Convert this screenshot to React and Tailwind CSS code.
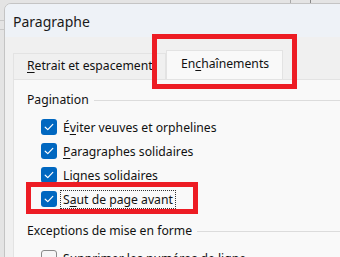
function Check({ checked = true }) {
  if (!checked) {
    return <span className="block h-[16px] w-[16px] shrink-0 rounded-[3px] border border-[#8a8a8a] bg-[#f6f6f6]" />
  }
  return (
    <span className="flex h-[16px] w-[16px] shrink-0 items-center justify-center rounded-[3px] bg-[#0067c0]">
      <svg width="10" height="8" viewBox="0 0 10 8" fill="none">
        <path d="M1.2 4.2 L3.8 6.6 L8.8 1.4" stroke="white" strokeWidth="1.2" strokeLinecap="round" strokeLinejoin="round" />
      </svg>
    </span>
  )
}

// lettre soulignée (touche d'accès)
function K({ children }) {
  return <span className="underline decoration-1 underline-offset-[2px]">{children}</span>
}

function Row({ checked, focus, children }) {
  return (
    <div className="flex h-[24px] items-center pl-[14px]">
      <Check checked={checked} />
      <span className={'ml-[4px] px-[2px] leading-[17px] ' + (focus ? 'outline outline-1 outline-dotted outline-[#333]' : '')}>
        {children}
      </span>
    </div>
  )
}

function Group({ label }) {
  return (
    <div className="flex h-[20px] items-center">
      <span>{label}</span>
      <span className="ml-[5px] h-px flex-1 bg-[#dcdcdc]" />
    </div>
  )
}

export default function App() {
  return (
    <div className="relative h-[257px] w-[340px] overflow-hidden bg-[#e4e4e4] font-['Noto_Sans',sans-serif] text-[12.2px] text-[#111]">
      {/* fond du document derrière la boîte de dialogue */}
      <div className="absolute left-0 top-[20px] h-px w-[4px] bg-[#c8c8c8]" />
      <div className="absolute left-0 top-[29px] h-px w-[4px] bg-[#c8c8c8]" />
      <div className="absolute left-[290px] top-0 h-[3px] w-px bg-[#aaa]" />
      <div className="absolute left-[310px] top-0 h-[3px] w-px bg-[#888]" />

      <div className="absolute left-[4px] top-[3px] h-[300px] w-[380px] overflow-hidden rounded-tl-[7px] border border-[#c4c4c4] bg-[#f0f0f0]">
        <div className="flex h-[33px] items-center bg-[#eef2f7] pl-[8px] pt-[2px] text-[14px] text-[#1a1a1a]">
          Paragraphe
        </div>

        <div className="px-[8px] pt-[13px]">
          <div className="flex h-[29px] items-end">
            <div className="flex h-[26px] w-[153px] items-center overflow-hidden whitespace-nowrap border border-b-0 border-[#e3e3e3] bg-[#f0f0f0] pl-[13px]">
              <span><K>R</K>etrait et espacement</span>
            </div>
            <div className="flex h-[29px] w-[117px] items-center border border-b-0 border-[#e3e3e3] bg-[#f9f9f9] pb-[1px] pl-[14px]">
              <span>En<K>c</K>haînements</span>
            </div>
          </div>

          <div className="h-[200px] border border-[#e3e3e3] bg-[#f9f9f9] pl-[13px] pt-[10px]">
            <Group label="Pagination" />
            <div className="pt-[5px]">
              <Row checked>É<K>v</K>iter veuves et orphelines</Row>
              <Row checked><K>P</K>aragraphes solidaires</Row>
              <Row checked><K>L</K>ignes solidaires</Row>
              <Row checked focus>S<K>a</K>ut de page avant</Row>
            </div>
            <div className="pt-[10px]">
              <Group label="Exceptions de mise en forme" />
            </div>
            <div className="pt-[5px]">
              <Row checked={false}>Supprimer les numéros de ligne</Row>
            </div>
          </div>
        </div>
      </div>

      {/* encadrés rouges d'annotation */}
      <div className="absolute left-[152px] top-[34px] h-[55px] w-[145px] border-[5px] border-[#ed1c24]" />
      <div className="absolute left-[26px] top-[182px] h-[32px] w-[172px] border-[5px] border-[#ed1c24]" />
    </div>
  )
}
